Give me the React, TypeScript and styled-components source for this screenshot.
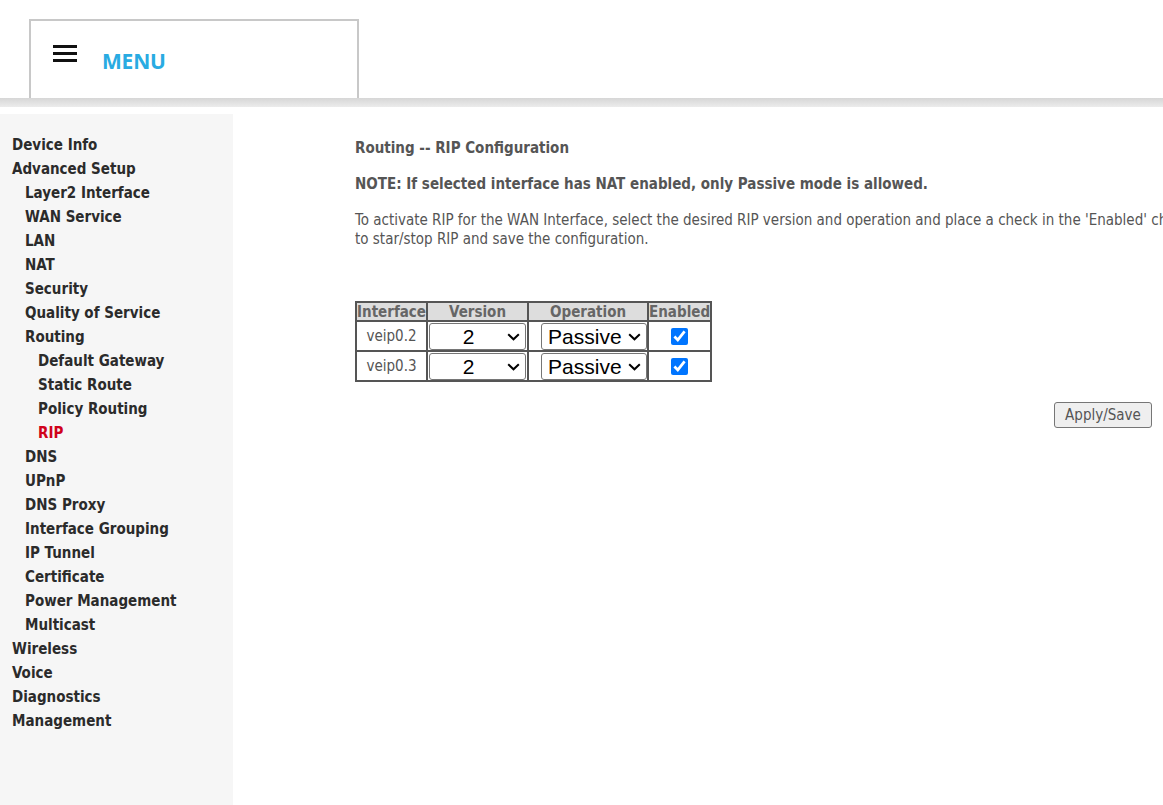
import React from 'react';
import styled, { createGlobalStyle } from 'styled-components';

const GlobalStyle = createGlobalStyle`
  html, body {
    margin: 0;
    padding: 0;
    background: #ffffff;
    overflow: hidden;
  }
`;

const uiFont = `'DejaVu Sans Condensed', 'DejaVu Sans', sans-serif`;

const Page = styled.div`
  width: 1163px;
  height: 805px;
  display: flex;
  flex-direction: column;
`;

const Header = styled.header`
  height: 98px;
  box-sizing: border-box;
  padding: 19px 0 0 29px;
`;

const MenuBox = styled.div`
  width: 330px;
  height: 79px;
  box-sizing: border-box;
  border: 2px solid #c8c8c8;
  border-bottom: none;
  display: flex;
  align-items: flex-start;
  padding: 24px 0 0 22px;
`;

const MenuLabel = styled.span`
  margin: 6px 0 0 25px;
  font-family: 'Open Sans', 'Liberation Sans', sans-serif;
  font-weight: 700;
  font-size: 21px;
  line-height: 1;
  color: #29abe2;
  letter-spacing: -0.2px;
`;

const Band = styled.div`
  height: 9px;
  background: linear-gradient(#d6d6d6, #ececec);
`;

const Body = styled.div`
  flex: 1;
  display: flex;
  margin-top: 7px;
  min-height: 0;
`;

const Sidebar = styled.nav`
  width: 233px;
  flex-shrink: 0;
  background: #f6f6f6;
  box-sizing: border-box;
  padding-top: 19px;
`;

const NavItem = styled.div<{ level: number; active?: boolean }>`
  height: 24px;
  line-height: 24px;
  padding-left: ${p => 12 + p.level * 13}px;
  font-family: ${uiFont};
  font-weight: 700;
  font-size: 15px;
  color: ${p => (p.active ? '#d0021b' : '#2b2b2b')};
  white-space: nowrap;
`;

const Main = styled.main`
  width: 1496px;
  flex-shrink: 0;
  margin-left: 122px;
  padding-top: 25px;
  font-family: ${uiFont};
  color: #555555;
`;

const Title = styled.div`
  font-size: 15px;
  font-weight: 700;
  line-height: 18px;
`;

const Note = styled(Title)`
  margin-top: 18px;
`;

const Para = styled.p`
  margin: 18px 0 0;
  font-size: 15px;
  line-height: 19px;
`;

const Table = styled.table`
  margin-top: 52px;
  border-collapse: collapse;
  border: 2px solid #555;
  font-family: ${uiFont};
`;

const HeadCell = styled.th<{ w: number }>`
  width: ${p => p.w}px;
  height: 17px;
  padding: 0;
  border: 2px solid #555;
  background: #dddddd;
  color: #666;
  font-size: 15px;
  font-weight: 700;
  line-height: 16px;
  text-align: center;
`;

const Cell = styled.td<{ align?: string }>`
  height: 28px;
  padding: 0 ${p => (p.align === 'right' ? '0 0 1px' : '1px')};
  border: 2px solid #555;
  text-align: ${p => p.align || 'center'};
  font-size: 15px;
  color: #555;
`;

const SelectWrap = styled.span`
  position: relative;
  display: inline-block;
  vertical-align: middle;
`;

const Select = styled.select<{ w: number; centered?: boolean }>`
  appearance: none;
  -webkit-appearance: none;
  display: block;
  width: ${p => p.w}px;
  height: 27px;
  box-sizing: border-box;
  font-family: 'Liberation Sans', Arial, sans-serif;
  font-size: 21px;
  color: #000;
  background: #fff;
  border: 1px solid #767676;
  border-radius: 3px;
  padding: 0 ${p => (p.centered ? 18 : 22)}px 0 ${p => (p.centered ? 0 : 6)}px;
  text-align-last: ${p => (p.centered ? 'center' : 'left')};
`;

const Chevron = styled.svg`
  position: absolute;
  right: 6px;
  top: 10px;
  pointer-events: none;
`;

const Check = styled.input`
  width: 17px;
  height: 17px;
  margin: 0;
  accent-color: #0075ff;
  vertical-align: middle;
`;

const ButtonRow = styled.div`
  margin-top: 20px;
  text-align: center;
`;

const Button = styled.button`
  width: 98px;
  height: 26px;
  font-family: ${uiFont};
  font-size: 15px;
  color: #555;
  background: #efefef;
  border: 1px solid #767676;
  border-radius: 3px;
  padding: 0;
`;

const Hamburger = () => (
  <svg width="24" height="18" viewBox="0 0 24 18">
    <rect x="0" y="0" width="24" height="3" fill="#111" />
    <rect x="0" y="7" width="24" height="3" fill="#111" />
    <rect x="0" y="14" width="24" height="3" fill="#111" />
  </svg>
);

const Dropdown: React.FC<{ w: number; centered?: boolean; value: string; options: [string, string][] }> = ({
  w,
  centered,
  value,
  options,
}) => (
  <SelectWrap>
    <Select w={w} centered={centered} defaultValue={value}>
      {options.map(([v, l]) => (
        <option key={v} value={v}>
          {l}
        </option>
      ))}
    </Select>
    <Chevron width="13" height="8" viewBox="0 0 13 8">
      <path d="M1.2 1.2 L6.5 6.3 L11.8 1.2" fill="none" stroke="#000" strokeWidth="2" />
    </Chevron>
  </SelectWrap>
);

const nav: [string, number, boolean?][] = [
  ['Device Info', 0],
  ['Advanced Setup', 0],
  ['Layer2 Interface', 1],
  ['WAN Service', 1],
  ['LAN', 1],
  ['NAT', 1],
  ['Security', 1],
  ['Quality of Service', 1],
  ['Routing', 1],
  ['Default Gateway', 2],
  ['Static Route', 2],
  ['Policy Routing', 2],
  ['RIP', 2, true],
  ['DNS', 1],
  ['UPnP', 1],
  ['DNS Proxy', 1],
  ['Interface Grouping', 1],
  ['IP Tunnel', 1],
  ['Certificate', 1],
  ['Power Management', 1],
  ['Multicast', 1],
  ['Wireless', 0],
  ['Voice', 0],
  ['Diagnostics', 0],
  ['Management', 0],
];

const rows = ['veip0.2', 'veip0.3'];

export default function App() {
  return (
    <>
      <GlobalStyle />
      <Page>
        <Header>
          <MenuBox>
            <Hamburger />
            <MenuLabel>MENU</MenuLabel>
          </MenuBox>
        </Header>
        <Band />
        <Body>
          <Sidebar>
            {nav.map(([label, level, active]) => (
              <NavItem key={label} level={level} active={active}>
                {label}
              </NavItem>
            ))}
          </Sidebar>
          <Main>
            <Title>Routing -- RIP Configuration</Title>
            <Note>NOTE: If selected interface has NAT enabled, only Passive mode is allowed.</Note>
            <Para>
              To activate RIP for the WAN Interface, select the desired RIP version and operation and place a check in
              the 'Enabled' checkbox.
              <br />
              to star/stop RIP and save the configuration.
            </Para>
            <Table>
              <thead>
                <tr>
                  <HeadCell w={68}>Interface</HeadCell>
                  <HeadCell w={96}>Version</HeadCell>
                  <HeadCell w={118}>Operation</HeadCell>
                  <HeadCell w={59}>Enabled</HeadCell>
                </tr>
              </thead>
              <tbody>
                {rows.map(r => (
                  <tr key={r}>
                    <Cell>{r}</Cell>
                    <Cell>
                      <Dropdown
                        w={97}
                        centered
                        value="2"
                        options={[
                          ['1', '1'],
                          ['2', '2'],
                          ['both', 'Both'],
                        ]}
                      />
                    </Cell>
                    <Cell align="right">
                      <Dropdown
                        w={106}
                        value="passive"
                        options={[
                          ['active', 'Active'],
                          ['passive', 'Passive'],
                        ]}
                      />
                    </Cell>
                    <Cell>
                      <Check type="checkbox" defaultChecked />
                    </Cell>
                  </tr>
                ))}
              </tbody>
            </Table>
            <ButtonRow>
              <Button>Apply/Save</Button>
            </ButtonRow>
          </Main>
        </Body>
      </Page>
    </>
  );
}
